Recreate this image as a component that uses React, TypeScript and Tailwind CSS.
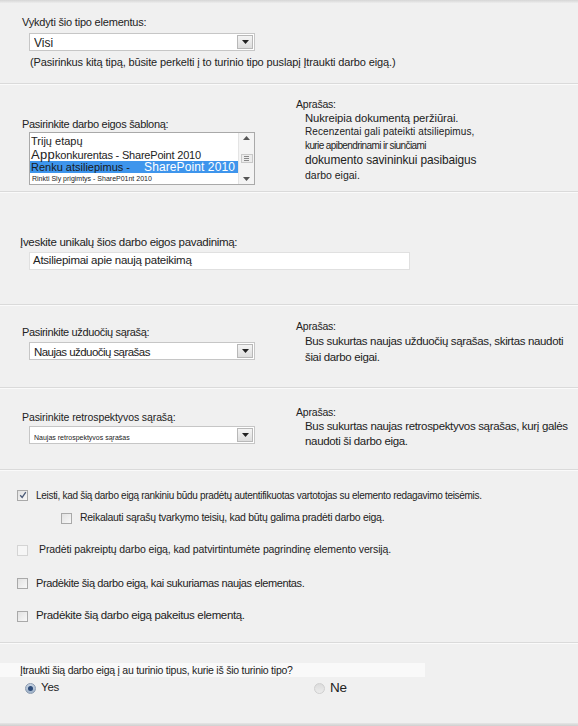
import React from "react";

const font = { fontFamily: '"Liberation Sans", Arial, sans-serif' };

function DropArrow() {
  return (
    <div className="ml-auto mr-[1px] flex h-[14px] w-[16px] items-center justify-center border border-[#b8b8b8] bg-gradient-to-b from-[#f4f4f4] to-[#dedede]">
      <svg width="7" height="4" viewBox="0 0 7 4">
        <path d="M0 0h7L3.5 4z" fill="#222" />
      </svg>
    </div>
  );
}

function Select({ children, w = "w-[226px]" }: { children: React.ReactNode; w?: string }) {
  return (
    <div className={`ml-[29px] flex h-[18px] ${w} items-center border border-[#c6c6c6] bg-white pl-[4px]`}>
      <div className="flex-1 truncate">{children}</div>
      <DropArrow />
    </div>
  );
}

function Checkbox({ checked = false, faint = false }: { checked?: boolean; faint?: boolean }) {
  return (
    <div
      className={`flex h-[11px] w-[11px] shrink-0 items-center justify-center border ${
        faint ? "border-[#d4d4d4] bg-[#f6f6f6]" : "border-[#a9a9a9] bg-gradient-to-br from-[#e2e2e2] to-[#f8f8f8]"
      }`}
    >
      {checked && (
        <svg width="8" height="8" viewBox="0 0 8 8">
          <path d="M1.2 4.2 L3.2 6.4 L6.8 1.2" fill="none" stroke="#4a5a78" strokeWidth="1.3" />
        </svg>
      )}
    </div>
  );
}

function Sep() {
  return <div className="h-[2px] border-t border-[#dadada] bg-[#fafafa]" />;
}

export default function App() {
  return (
    <div className="w-[578px] h-[726px] bg-[#f0f0f0] text-[#222] overflow-hidden flex flex-col" style={font}>
      <div className="h-[3px] bg-gradient-to-b from-[#d6d6d6] to-[#ececec]" />
      {/* Section 1 */}
      <div className="h-[80px] pt-[12px]">
        <div className="ml-[22px] h-[14px] text-[11px] leading-[14px] tracking-[-0.2px]">Vykdyti šio tipo elementus:</div>
        <div className="mt-[4px]">
          <Select>
            <span className="text-[12px] leading-[16px]">Visi</span>
          </Select>
        </div>
        <div className="ml-[30px] mt-[4px] text-[11px] leading-[14px] tracking-[-0.13px] whitespace-nowrap">
          (Pasirinkus kitą tipą, būsite perkelti į to turinio tipo puslapį Įtraukti darbo eigą.)
        </div>
      </div>
      <Sep />
      {/* Section 2 */}
      <div className="h-[106px] flex">
        <div className="w-[296px] pt-[32px]">
          <div className="ml-[22px] h-[14px] text-[11px] leading-[14px] tracking-[-0.3px]">Pasirinkite darbo eigos šabloną:</div>
          <div className="ml-[29px] mt-[1px] flex h-[53px] w-[226px] border border-[#a9a9a9] bg-white">
            <div className="flex-1 pt-[2px] overflow-hidden">
              <div className="pl-[1px] h-[13px] text-[11px] leading-[13px]">Trijų etapų</div>
              <div className="pl-[1px] h-[13px] text-[11px] leading-[13px] whitespace-nowrap tracking-[-0.2px]">
                <span className="text-[13px] tracking-[0.3px]">App</span>konkurentas - SharePoint 2010
              </div>
              <div className="h-[12px] bg-[#3e95ec] text-[11px] leading-[12px] whitespace-nowrap">
                <span className="text-[#1a1a1a] pl-[1px]">Renku atsiliepimus -</span>
                <span className="ml-[14px] text-white text-[12px] tracking-[0.1px]">SharePoint 2010</span>
              </div>
              <div className="pl-[2px] h-[12px] text-[7px] leading-[12px] whitespace-nowrap">Rinkti Sly prigimtys - ShareP01nt 2010</div>
            </div>
            <div className="flex w-[16px] flex-col items-center justify-between border-l border-[#e4e4e4] bg-[#f4f4f4] py-[3px]">
              <svg width="7" height="4" viewBox="0 0 7 4"><path d="M3.5 0L7 4H0z" fill="#555" /></svg>
              <div className="flex h-[9px] w-[12px] flex-col items-center justify-center gap-[1px] border border-[#c9c9c9] bg-[#ececec]">
                <div className="h-px w-[5px] bg-[#888]" />
                <div className="h-px w-[5px] bg-[#888]" />
                <div className="h-px w-[5px] bg-[#888]" />
              </div>
              <svg width="7" height="4" viewBox="0 0 7 4"><path d="M0 0h7L3.5 4z" fill="#555" /></svg>
            </div>
          </div>
        </div>
        <div className="pt-[12px]">
          <div className="h-[14px] text-[10.5px] leading-[14px] tracking-[-0.2px]">Aprašas:</div>
          <div className="ml-[9px] whitespace-nowrap">
            <div className="h-[14px] text-[11.3px] leading-[14px] tracking-[-0.1px]">Nukreipia dokumentą peržiūrai.</div>
            <div className="h-[14px] text-[10px] leading-[14px] tracking-[0.08px]">Recenzentai gali pateikti atsiliepimus,</div>
            <div className="h-[14px] text-[10px] leading-[14px] tracking-[-0.6px]">kurie apibendrinami ir siunčiami</div>
            <div className="h-[15px] text-[11.9px] leading-[15px] tracking-[-0.1px]">dokumento savininkui pasibaigus</div>
            <div className="h-[14px] text-[10.5px] leading-[14px]">darbo eigai.</div>
          </div>
        </div>
      </div>
      <Sep />
      {/* Section 3 */}
      <div className="h-[111px] pt-[42px]">
        <div className="ml-[20px] h-[14px] text-[11.5px] leading-[14px] tracking-[-0.3px]">Įveskite unikalų šios darbo eigos pavadinimą:</div>
        <div className="ml-[29px] mt-[3px] flex h-[18px] w-[381px] items-center border border-[#e0e0e0] bg-white pl-[3px] text-[11.5px] tracking-[-0.25px]">
          Atsiliepimai apie naują pateikimą
        </div>
      </div>
      <Sep />
      {/* Section 4 */}
      <div className="h-[81px] flex">
        <div className="w-[296px] pt-[19px]">
          <div className="ml-[22px] h-[14px] text-[11px] leading-[14px] tracking-[-0.35px]">Pasirinkite užduočių sąrašą:</div>
          <div className="mt-[3px]">
            <Select>
              <span className="text-[11.5px] leading-[16px] tracking-[-0.55px]">Naujas užduočių sąrašas</span>
            </Select>
          </div>
        </div>
        <div className="pt-[13px]">
          <div className="h-[14px] text-[10.5px] leading-[14px] tracking-[-0.2px]">Aprašas:</div>
          <div className="ml-[9px] text-[11.5px] leading-[16px] tracking-[-0.35px] whitespace-nowrap">
            <div>Bus sukurtas naujas užduočių sąrašas, skirtas naudoti</div>
            <div>šiai darbo eigai.</div>
          </div>
        </div>
      </div>
      <Sep />
      {/* Section 5 */}
      <div className="h-[80px] flex">
        <div className="w-[296px] pt-[21px]">
          <div className="ml-[22px] h-[14px] text-[10.5px] leading-[14px] tracking-[-0.1px]">Pasirinkite retrospektyvos sąrašą:</div>
          <div className="mt-[2px]">
            <Select>
              <span className="text-[7px] leading-[16px]">Naujas retrospektyvos sąrašas</span>
            </Select>
          </div>
        </div>
        <div className="pt-[16px]">
          <div className="h-[14px] text-[10.5px] leading-[14px] tracking-[-0.2px]">Aprašas:</div>
          <div className="ml-[9px] text-[11.5px] leading-[15px] tracking-[-0.33px] whitespace-nowrap">
            <div>Bus sukurtas naujas retrospektyvos sąrašas, kurį galės</div>
            <div>naudoti ši darbo eiga.</div>
          </div>
        </div>
      </div>
      <Sep />
      {/* Section 6 */}
      <div className="h-[171px] pt-[16px]">
        <div className="ml-[17px] flex h-[16px] items-center">
          <Checkbox checked />
          <span className="ml-[8px] text-[10px] tracking-[-0.3px] whitespace-nowrap">
            Leisti, kad šią darbo eigą rankiniu būdu pradėtų autentifikuotas vartotojas su elemento redagavimo teisėmis.
          </span>
        </div>
        <div className="ml-[61px] mt-[7px] flex h-[16px] items-center">
          <Checkbox />
          <span className="ml-[8px] text-[10.5px] tracking-[-0.28px] whitespace-nowrap">
            Reikalauti sąrašų tvarkymo teisių, kad būtų galima pradėti darbo eigą.
          </span>
        </div>
        <div className="ml-[17px] mt-[16px] flex h-[16px] items-center">
          <Checkbox faint />
          <span className="ml-[11px] text-[10.5px] tracking-[-0.11px] whitespace-nowrap">
            Pradėti pakreiptų darbo eigą, kad patvirtintumėte pagrindinę elemento versiją.
          </span>
        </div>
        <div className="ml-[17px] mt-[17px] flex h-[16px] items-center">
          <Checkbox />
          <span className="ml-[8px] text-[11px] tracking-[-0.38px] whitespace-nowrap">
            Pradėkite šią darbo eigą, kai sukuriamas naujas elementas.
          </span>
        </div>
        <div className="ml-[17px] mt-[17px] flex h-[16px] items-center">
          <Checkbox />
          <span className="ml-[8px] text-[11.5px] tracking-[-0.35px] whitespace-nowrap">
            Pradėkite šią darbo eigą pakeitus elementą.
          </span>
        </div>
      </div>
      <Sep />
      {/* Section 7 */}
      <div className="flex-1 pt-[19px] flex flex-col">
        <div className="w-[425px] h-[14px] bg-[#f9f9f9] pl-[20px] text-[10.5px] leading-[14px] tracking-[-0.24px] whitespace-nowrap">
          Įtraukti šią darbo eigą į au turinio tipus, kurie iš šio turinio tipo?
        </div>
        <div className="mt-[3px] flex h-[16px] items-center">
          <div className="ml-[25px] flex items-center w-[289px]">
            <div className="flex h-[11px] w-[11px] items-center justify-center rounded-full border border-[#8b9bb0] bg-gradient-to-b from-[#c7d3e2] to-[#9fb2c9]">
              <div className="h-[5px] w-[5px] rounded-full bg-[#2c4a78]" />
            </div>
            <span className="ml-[5px] text-[11.5px] tracking-[-0.2px]">Yes</span>
          </div>
          <div className="flex items-center">
            <div className="h-[11px] w-[11px] rounded-full border border-[#cfcfcf] bg-gradient-to-b from-[#dcdcdc] to-[#ececec]" />
            <span className="ml-[5px] text-[13.5px] tracking-[-0.3px]">Ne</span>
          </div>
        </div>
        <div className="mt-auto h-[3px] bg-gradient-to-b from-[#e6e6e6] to-[#cfcfcf]" />
      </div>
    </div>
  );
}
